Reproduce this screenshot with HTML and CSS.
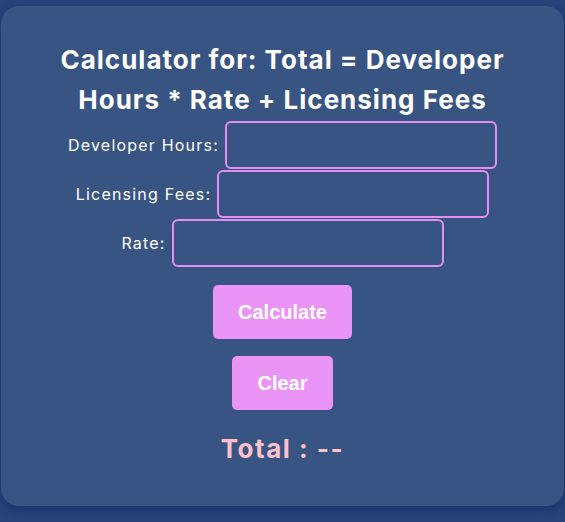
FILE: index.html
```html
<!DOCTYPE html>
<html lang="en">
<head>
<meta charset="utf-8">
<title>Calculator</title>
<link rel="stylesheet" href="styles.css">
</head>
<body>
<div class="card">
  <h1 class="title">Calculator for: Total = Developer Hours * Rate + Licensing Fees</h1>
  <div class="fields">
    <div class="row"><label class="label" for="hours">Developer Hours:</label><input class="input" id="hours" type="text"></div>
    <div class="row"><label class="label" for="fees">Licensing Fees:</label><input class="input" id="fees" type="text"></div>
    <div class="row"><label class="label" for="rate">Rate:</label><input class="input" id="rate" type="text"></div>
  </div>
  <button class="btn btn-calc" type="button">Calculate</button>
  <button class="btn btn-clear" type="button">Clear</button>
  <div class="total">Total : --</div>
</div>
</body>
</html>
```
FILE: styles.css
```css
html, body {
  margin: 0;
  padding: 0;
}
body {
  background: #27437a;
  width: 565px;
  height: 522px;
  overflow: hidden;
  font-family: "Inter", "Liberation Sans", sans-serif;
}
.card {
  margin: 6px 1px 0 1px;
  height: 500px;
  box-sizing: border-box;
  background: #385483;
  border-radius: 18px;
  box-shadow: 0 4px 10px rgba(20, 40, 90, 0.5);
  display: flex;
  flex-direction: column;
  align-items: center;
  padding-top: 34px;
}
.title {
  margin: 0;
  width: 480px;
  text-align: center;
  color: #ffffff;
  font-size: 26px;
  line-height: 40px;
  font-weight: 700;
  letter-spacing: 1px;
}
.fields {
  display: flex;
  flex-direction: column;
  align-items: center;
  gap: 1px;
  margin-top: 1px;
}
.row {
  display: flex;
  align-items: center;
  gap: 6px;
}
.label {
  color: #ffffff;
  font-size: 16px;
  letter-spacing: 1.2px;
}
.input {
  width: 272px;
  height: 48px;
  box-sizing: border-box;
  border: 2px solid #e38ff2;
  border-radius: 6px;
  background: transparent;
  margin: 0;
  padding: 0 10px;
  color: #fff;
}
.btn {
  border: none;
  border-radius: 5px;
  background: #ea94f5;
  color: #ffffff;
  font-family: "Liberation Sans", Arial, sans-serif;
  font-weight: 700;
  font-size: 20px;
  line-height: 24px;
  padding: 15px 25px;
}
.btn-calc {
  margin-top: 18px;
}
.btn-clear {
  margin-top: 17px;
}
.total {
  margin-top: 20px;
  color: #ffc0cb;
  font-size: 26px;
  line-height: 38px;
  font-weight: 700;
  letter-spacing: 1.5px;
}
```
